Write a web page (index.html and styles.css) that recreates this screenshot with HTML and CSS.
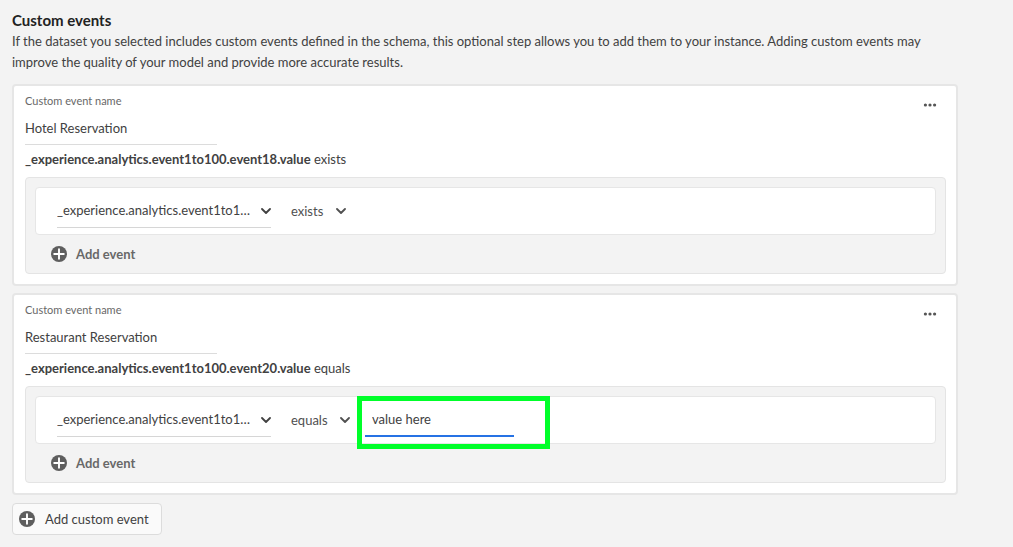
FILE: index.html
```html
<!DOCTYPE html>
<html lang="en">
<head>
<meta charset="utf-8">
<meta name="viewport" content="width=device-width, initial-scale=1">
<title>Custom events</title>
<link rel="stylesheet" href="styles.css">
</head>
<body>
<svg class="sprite" aria-hidden="true">
  <symbol id="plus" viewBox="0 0 16 16"><circle cx="8" cy="8" r="8" fill="currentColor"/><path d="M8 3.2v9.6M3.2 8h9.6" stroke="#fff" stroke-width="1.9" stroke-linecap="round"/></symbol>
  <symbol id="chevron" viewBox="0 0 10 6"><path d="M1 1l4 4 4-4" fill="none" stroke="currentColor" stroke-width="1.8" stroke-linecap="round" stroke-linejoin="round"/></symbol>
  <symbol id="more" viewBox="0 0 14 4"><circle cx="2.4" cy="2" r="1.6" fill="currentColor"/><circle cx="7" cy="2" r="1.6" fill="currentColor"/><circle cx="11.6" cy="2" r="1.6" fill="currentColor"/></symbol>
</svg>
<main class="page">
  <h1 class="title">Custom events</h1>
  <p class="description">If the dataset you selected includes custom events defined in the schema, this optional step allows you to add them to your instance. Adding custom events may improve the quality of your model and provide more accurate results.</p>

  <div class="cards">
    <section class="card">
      <header class="card-head">
        <div class="field">
          <label class="label" for="name-1">Custom event name</label>
          <input class="name" id="name-1" type="text" value="Hotel Reservation">
        </div>
        <button class="more" type="button" aria-label="More actions"><svg><use href="#more"/></svg></button>
      </header>
      <p class="expression"><strong>_experience.analytics.event1to100.event18.value</strong> exists</p>
      <div class="panel">
        <div class="rule">
          <div class="picker picker-field">
            <select aria-label="Event field"><option>_experience.analytics.event1to1…</option></select>
            <svg><use href="#chevron"/></svg>
          </div>
          <div class="picker picker-operator">
            <select aria-label="Operator"><option>exists</option></select>
            <svg><use href="#chevron"/></svg>
          </div>
        </div>
        <button class="add-event" type="button"><svg><use href="#plus"/></svg>Add event</button>
      </div>
    </section>

    <section class="card">
      <header class="card-head">
        <div class="field">
          <label class="label" for="name-2">Custom event name</label>
          <input class="name" id="name-2" type="text" value="Restaurant Reservation">
        </div>
        <button class="more" type="button" aria-label="More actions"><svg><use href="#more"/></svg></button>
      </header>
      <p class="expression"><strong>_experience.analytics.event1to100.event20.value</strong> equals</p>
      <div class="panel">
        <div class="rule">
          <div class="picker picker-field">
            <select aria-label="Event field"><option>_experience.analytics.event1to1…</option></select>
            <svg><use href="#chevron"/></svg>
          </div>
          <div class="picker picker-operator">
            <select aria-label="Operator"><option>equals</option></select>
            <svg><use href="#chevron"/></svg>
          </div>
          <div class="value">
            <input type="text" aria-label="Value" value="value here">
            <span class="highlight"></span>
          </div>
        </div>
        <button class="add-event" type="button"><svg><use href="#plus"/></svg>Add event</button>
      </div>
    </section>
  </div>

  <button class="add-custom" type="button"><svg><use href="#plus"/></svg>Add custom event</button>
</main>
</body>
</html>
```
FILE: styles.css
```css
* { box-sizing: border-box; }

body {
  margin: 0;
  background: #f3f3f3;
  color: #414141;
  font: 13px/21px Lato, "Noto Sans", sans-serif;
}

button, input, select { font: inherit; color: inherit; }
button { cursor: pointer; }

.sprite { display: none; }

.page { padding: 10px 55px 12px 12px; }

.title {
  margin: 0;
  color: #222;
  font-size: 15px;
  line-height: 21px;
  font-weight: 700;
}

.description { margin: 0 0 11px; max-width: 930px; }

.cards { display: flex; flex-direction: column; gap: 7px; }

.card {
  padding: 7px 10px 10px 11px;
  background: #fff;
  border: 2px solid #e6e6e6;
  border-radius: 4px;
}

.card-head { display: flex; justify-content: space-between; align-items: flex-start; }
.field { display: flex; flex-direction: column; gap: 3px; }
.label { color: #686868; font-size: 11px; line-height: 16px; }

.name {
  width: 192px;
  height: 33px;
  padding: 0;
  background: none;
  border: 0;
  border-bottom: 1px solid #dcdcdc;
  outline: 0;
}

.more {
  display: flex;
  align-items: center;
  justify-content: center;
  width: 32px;
  height: 24px;
  padding: 0;
  background: none;
  border: 0;
  color: #555;
}
.more svg { width: 14px; height: 4px; }

.expression { margin: 0 0 4px; line-height: 28px; }

.panel {
  padding: 9px 9px 0;
  background: #f3f3f3;
  border: 1px solid #e4e4e4;
  border-radius: 4px;
}

.rule {
  display: flex;
  align-items: center;
  height: 48px;
  padding: 0 21px;
  background: #fff;
  border: 1px solid #e6e6e6;
  border-radius: 4px;
}

.picker { display: grid; align-items: center; }
.picker select, .picker svg { grid-area: 1 / 1; }
.picker select {
  height: 33px;
  padding: 0 22px 0 0;
  appearance: none;
  background: none;
  border: 0;
  border-radius: 0;
  outline: 0;
}
.picker svg { justify-self: end; width: 10px; height: 6px; pointer-events: none; }
.picker-field { width: 214px; grid-template-columns: minmax(0, 1fr); }
.picker-field select { width: 100%; padding-right: 18px; border-bottom: 1px solid #d6d6d6; }
.picker-operator { margin-left: 20px; color: #505050; }

.value { position: relative; margin-left: 15px; }
.value input {
  display: block;
  width: 149px;
  height: 34px;
  padding: 0 7px;
  background: none;
  border: 0;
  border-bottom: 2px solid #2672e4;
  outline: 0;
}
.highlight {
  position: absolute;
  inset: -7px -36px -12px -8px;
  border: 5px solid #00ff2a;
  pointer-events: none;
}

.add-event {
  display: flex;
  align-items: center;
  gap: 9px;
  height: 38px;
  padding: 0 16px;
  background: none;
  border: 0;
  color: #686868;
  font-weight: 700;
}

.add-custom {
  display: flex;
  align-items: center;
  gap: 10px;
  height: 32px;
  margin-top: 8px;
  padding: 0 12px 0 6px;
  background: #fafafa;
  border: 1px solid #dcdcdc;
  border-radius: 4px;
}

.add-event svg, .add-custom svg { width: 16px; height: 16px; color: #5e5e5e; }
```
